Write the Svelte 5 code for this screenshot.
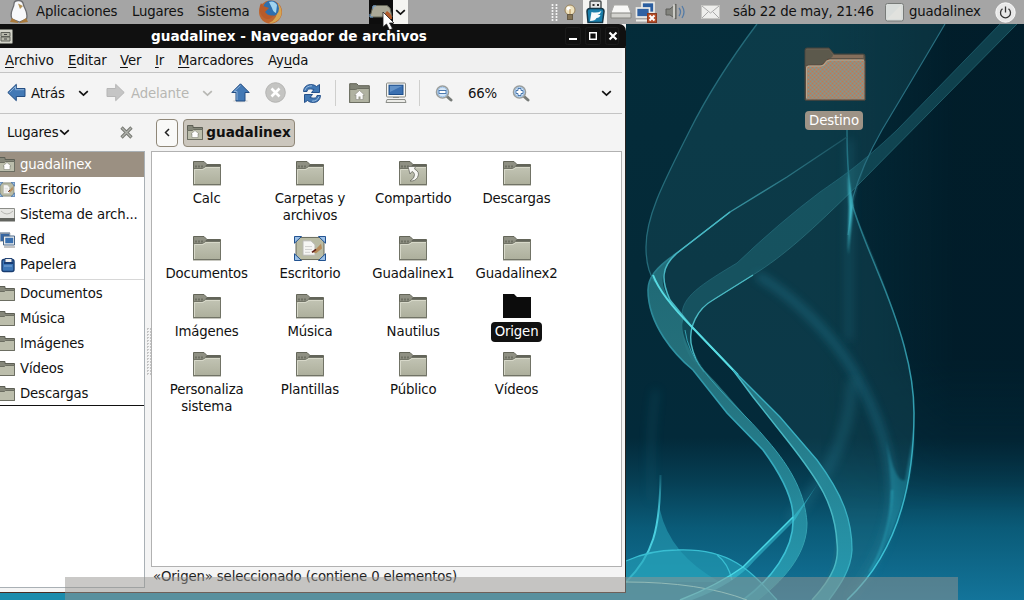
<script>
  const bookmarks = [
    { name: 'guadalinex', icon: 'home', selected: true },
    { name: 'Escritorio', icon: 'desktop' },
    { name: 'Sistema de arch...', icon: 'disk' },
    { name: 'Red', icon: 'network' },
    { name: 'Papelera', icon: 'trash' }
  ];
  const folders = ['Documentos', 'Música', 'Imágenes', 'Vídeos', 'Descargas'];
  const files = [
    ['Calc'], ['Carpetas y', 'archivos'], ['Compartido'], ['Descargas'],
    ['Documentos'], ['Escritorio'], ['Guadalinex1'], ['Guadalinex2'],
    ['Imágenes'], ['Música'], ['Nautilus'], ['Origen'],
    ['Personaliza', 'sistema'], ['Plantillas'], ['Público'], ['Vídeos']
  ];
  const kindOf = { Compartido: 'shared', Origen: 'selected' };
  const menus = [
    ['', 'A', 'rchivo', 49], ['', 'E', 'ditar', 38], ['', 'V', 'er', 21],
    ['', 'I', 'r', 9], ['', 'M', 'arcadores', 76], ['Ay', 'u', 'da', 40]
  ];
</script>

{#snippet folder(kind)}
  <svg class="fold" width="28" height="25" viewBox="0 0 28 25">
    {#if kind === 'selected'}
      <path d="M0 0h11l3 3h14v21H0z" fill="#0c0c0c" />
    {:else}
      <path d="M.5 23.500V.5H11l3 3h13.500v20z" fill="#8f9083" stroke="#646659" />
      <path d="M13.500 3.500h13.500v2H12z" fill="#62645a" />
      <path d="M2 5.500h8" stroke="#6f7164" stroke-width="2" stroke-dasharray="2 1" />
      <path d="M.5 8.500Q.5 7.500 2 7.500h7.500l3-2h15v18H.5z" fill="url(#fold-face)" stroke="#717366" />
      <path d="M1.500 23V8.500H10l3-2h14" fill="none" stroke="#d7d8c9" />
      <path d="M0 24.500h28" stroke="#c8c8c0" />
      {#if kind === 'shared'}
        <path d="M9 5.500h7.500L15.500 8q6 3 3 8.500-2.500 4-7.500 3.500 5-3 4.500-6.500-.5-2.500-2.500-3L11 13z" fill="#f7f7f4" stroke="#67685f" stroke-width=".8" />
      {/if}
    {/if}
  </svg>
{/snippet}

{#snippet desk(w, h)}
  <svg width={w} height={h} viewBox="0 0 32 26" preserveAspectRatio="none">
    <rect x="2" y="1.500" width="28" height="23" rx="2" fill="#b9bba4" stroke="#65675a" />
    <path d="M9 5h8l4 4v11H9z" fill="#f6f6f4" stroke="#b9b9b5" />
    <path d="M11 11h7M11 14h7M11 17h5" stroke="#cfcfcf" />
    <path d="M19 17l8-9 1 5-6 5z" fill="#b78c5b" />
    <path d="M18 17l4-3" stroke="#5c1d17" stroke-width="1.600" />
    <path d="M.5.5h7l-7 7zM31.500.5h-7l7 7zM.5 25.500h7l-7-7zM31.500 25.500h-7l7-7z" fill="#9cc0e6" stroke="#1c4e8e" />
  </svg>
{/snippet}

{#snippet smallFolder(home)}
  <svg width="16" height="16" viewBox="0 0 16 16">
    <path d="M.5.5h5.500v2h9.500v12H.5z" fill="#85877a" stroke="#5d5f55" />
    <path d="M.5 5.500h5l1-1h9v10H.5z" fill="#bcbeac" stroke="#6c6e62" />
    {#if home}<path d="M8 5.500l4 3.500h-1v3.500H5V9H4z" fill="#fff" stroke="#77796d" stroke-width=".5" />{/if}
  </svg>
{/snippet}

{#snippet chevron()}
  <svg width="11" height="7" viewBox="0 0 11 7"><path d="M1.200 1.200l4.300 4 4.300-4" fill="none" stroke="currentColor" stroke-width="1.700" /></svg>
{/snippet}

{#snippet magnifier(plus)}
  <svg width="18" height="18" viewBox="0 0 18 18">
    <path d="M11.500 12l4.500 4" stroke="#777b78" stroke-width="3" stroke-linecap="round" />
    <circle cx="7.500" cy="8" r="6" fill="#d5e6f7" stroke="#9a9d9b" stroke-width="1.600" />
    <circle cx="7.500" cy="8" r="4.800" fill="none" stroke="#9cc0e5" />
    {#if plus}
      <path d="M6 4.500h3v2h2v3H9v2H6v-2H4v-3h2z" fill="#fff" stroke="#3d6ea8" stroke-width=".9" />
    {:else}
      <rect x="4" y="6.500" width="7" height="3" fill="#fff" stroke="#3d6ea8" stroke-width=".9" />
    {/if}
  </svg>
{/snippet}

<div class="screen">
  <svg class="wall" width="1024" height="600" viewBox="0 0 1024 600">
    <defs>
      <linearGradient id="bg" x1="0" y1="0" x2="0" y2="1">
        <stop offset="0" stop-color="#042c3a" /><stop offset=".45" stop-color="#042a38" />
        <stop offset=".73" stop-color="#032a3a" /><stop offset=".8" stop-color="#063e53" />
        <stop offset=".88" stop-color="#0a5b78" /><stop offset="1" stop-color="#13749a" />
      </linearGradient>
      <linearGradient id="shade" x1=".8" x2=".93" y1="0" y2="0">
        <stop offset="0" stop-color="#001521" stop-opacity="0" /><stop offset="1" stop-color="#001521" stop-opacity=".6" />
      </linearGradient>
      <linearGradient id="shadeFade" x1="0" x2="0" y1="0" y2="1">
        <stop offset=".6" stop-color="#fff" /><stop offset=".85" stop-color="#000" />
      </linearGradient>
      <mask id="upper"><rect width="1024" height="600" fill="url(#shadeFade)" /></mask>
      <linearGradient id="ribbon" x1="0" x2="0" y1="240" y2="600" gradientUnits="userSpaceOnUse">
        <stop offset="0" stop-color="#2b8793" stop-opacity=".65" /><stop offset=".35" stop-color="#2b7c86" stop-opacity=".85" /><stop offset="1" stop-color="#29a2b8" stop-opacity=".85" />
      </linearGradient>
      <linearGradient id="edge" x1="0" x2="0" y1="24" y2="600" gradientUnits="userSpaceOnUse">
        <stop offset="0" stop-color="#1b5f70" /><stop offset=".4" stop-color="#287c8b" /><stop offset="1" stop-color="#3fcbe0" />
      </linearGradient>
      <linearGradient id="faint" x1="847" x2="720" y1="137" y2="220" gradientUnits="userSpaceOnUse">
        <stop offset="0" stop-color="#1b5260" /><stop offset="1" stop-color="#3a9aa8" />
      </linearGradient>
      <linearGradient id="wisp" x1="0" x2="0" y1="470" y2="520" gradientUnits="userSpaceOnUse">
        <stop offset="0" stop-color="#4acfdf" stop-opacity=".1" /><stop offset="1" stop-color="#4acfdf" />
      </linearGradient>
      <linearGradient id="fold-face" x1="0" y1="0" x2="0" y2="1"><stop offset="0" stop-color="#c2c4b4" /><stop offset="1" stop-color="#adaf9c" /></linearGradient>
      <filter id="soft" filterUnits="userSpaceOnUse" x="600" y="0" width="424" height="600"><feGaussianBlur stdDeviation="5" /></filter>
      <filter id="soft2" filterUnits="userSpaceOnUse" x="600" y="0" width="424" height="600"><feGaussianBlur stdDeviation="1" /></filter>
    </defs>
    <rect width="1024" height="600" fill="url(#bg)" />
    <rect width="1024" height="600" fill="url(#shade)" mask="url(#upper)" />
    <path d="M757 24Q715 80 690 130C665 180 646 215 646 247C646 285 675 310 692 327L740 378L817 477C845 520 838 570 812 600H847C890 555 914 490 914 413C910 330 870 250 853 207Q862 165 882 130L945 24z" fill="#2a7480" opacity=".22" />
    <path d="M757 275C800 300 835 340 853 370C885 425 893 470 892 503C891 535 870 573 847 600" fill="none" stroke="#237d95" stroke-width="6" opacity=".6" filter="url(#soft)" />
    <path d="M886 440C895 500 891 535 883 547Q870 573 847 600C890 555 914 490 914 430L905 480Q896 485 886 440z" fill="#27a0b7" opacity=".4" filter="url(#soft2)" />
    <path d="M892 490Q891 535 870 572" fill="none" stroke="#2fb4c9" opacity=".5" stroke-width="2" filter="url(#soft2)" />
    <path d="M852 380C850 440 825 480 790 520" fill="none" stroke="#2a8095" stroke-width="10" opacity=".3" filter="url(#soft)" />
    <path d="M849 140V340" stroke="#26758a" stroke-width="6" opacity=".35" filter="url(#soft)" />

    <path d="M1000 24L897 130C860 165 840 178 820 192Q780 222 737 263C700 285 682 297 682 315C680 335 685 350 692 360L711 378Q697 363 691 343C689 322 700 307 713 300L753 275C785 255 810 232 860 183L1017 24z" fill="#2b8490" opacity=".34" />
    <path d="M1000 24L897 130C860 165 840 178 820 192Q780 222 737 263C700 285 682 297 682 315" fill="none" stroke="#2a7585" stroke-width="1" opacity=".55" />
    <path d="M1017 24L860 183C810 232 785 255 753 275L713 300" fill="none" stroke="#347f8b" opacity=".55" />
    <path d="M753 275L713 300C697 309 689 327 691 343Q694 360 704 372" fill="none" stroke="#4bbac4" stroke-width="1.400" />
    <path d="M945 24Q915 75 882 130Q862 165 853 197L848 235" fill="none" stroke="#296f80" stroke-width="1.200" />
    <path d="M847 130Q847 178 853 207C860 230 869 250 877 270C900 325 914 370 914 413C914 500 890 560 847 600" fill="none" stroke="url(#edge)" stroke-width="1.500" />
    <path d="M847 145L848 173 853 207 848 255 849 207z" fill="#3fb9c8" filter="url(#soft2)" />
    <path d="M757 24Q715 80 690 130C665 180 646 215 646 247Q646 270 655 282" fill="none" stroke="#256b7a" stroke-width="1.300" />

    <path d="M847 137Q820 155 787 177L730 212 677 253" fill="none" stroke="url(#faint)" stroke-width="1.400" />
    <path d="M677 253C655 268 648 278 648 290C648 325 675 355 693 370L727 413L763 450C785 480 793 500 793 517C795 550 770 580 743 600H758C790 575 807 550 807 523C805 495 793 470 767 440C735 405 715 380 699 365C682 340 680 325 684 319L670 300C655 278 666 265 677 253z" fill="url(#ribbon)" />
    <path d="M677 253C655 268 648 278 648 290C648 325 675 355 693 370L727 413L763 450C785 480 793 500 793 517C795 550 770 580 743 600" fill="none" stroke="url(#edge)" stroke-width="1.600" />
    <path d="M685 330Q688 352 703 370C725 398 748 417 767 440C793 470 805 495 807 523C807 550 790 575 758 600" fill="none" stroke="#33a0b0" />
    <path d="M733 370C750 393 772 422 787 440C820 482 835 505 837 543C839 560 835 575 812 600H829C840 585 851 570 852 550C852 520 843 495 817 460L780 417z" fill="url(#ribbon)" />
    <path d="M730 212L677 253C661 267 661 280 670 300L692 327L733 370L753 397L787 440C820 482 835 505 837 543C839 560 835 575 812 600" fill="none" stroke="#48b8c4" stroke-width="1.500" />
    <path d="M653 275Q661 296 692 327L738 375" fill="none" stroke="#58dce3" stroke-width="2" />
    <path d="M733 370L780 417 817 460C843 495 852 520 852 550C851 570 840 585 829 600" fill="none" stroke="#38b0c2" stroke-width="1.300" />

    <path d="M652 500C650 460 650 430 656 390" stroke="#186378" fill="none" stroke-width="5" opacity=".35" filter="url(#soft)" />
    <path d="M660 487C660 530 653 555 626 582H720Q670 555 660 510z" fill="#2ba9bf" opacity=".5" />
    <path d="M660.500 475C660 530 653 555 626 582" fill="none" stroke="url(#wisp)" stroke-width="2" />
    <path d="M626 561Q650 550 677 550C730 548 750 570 777 600H626z" fill="#25a2b9" opacity=".6" />
    <path d="M626 561Q650 550 677 550C730 548 750 570 777 600M717 555Q728 563 732 580" fill="none" stroke="#39bed2" stroke-width="1.300" />
    <path d="M626 582Q700 582 747 600" fill="none" stroke="#8fe2df" />
    <path d="M820 480Q803 507 787 523L743 567Q718 585 680 600H692Q735 584 755 560L795 520z" fill="#3cc9dc" opacity=".5" />
    <path d="M793 517L743 567Q718 585 680 600" fill="none" stroke="#4bd8e5" stroke-width="1.500" />
    <rect y="592" width="630" height="8" fill="#1c8cac" />
  </svg>

  <header class="panel">
    <svg class="tux" width="20" height="24" viewBox="0 0 20 24">
      <path d="M3 19C0 12 5 8 5 4q0-3.500 4.500-3.500Q14 .5 14.500 5c1 4 5 7 3 14l-7 3z" fill="#f8f8fa" stroke="#6d6d70" stroke-width="1.300" />
      <path d="M9 3.500l5 2.500-3 3z" fill="#b49358" /><path d="M1 22l2-4 6 4v1zM19 22l-2-4-6 4v1z" fill="#a97a3c" />
    </svg>
    <span style="width:82px">Aplicaciones</span><span style="width:51px">Lugares</span><span style="width:53px">Sistema</span>
    <svg class="fox" width="25" height="24" viewBox="0 0 25 24">
      <circle cx="12.500" cy="12" r="11.500" fill="#be6630" /><path d="M20 3q6 8 2 15-5 6-11 5 10-4 9-20z" fill="#d6a552" />
      <circle cx="13" cy="8.500" r="8" fill="#2e6fae" /><path d="M11 2q5-2 8 3l-1 8q-3-1-4-5z" fill="#a0d3ef" />
      <path d="M3 3l2 3 6 2-4 4q4 5 9 3-4 6-10 3Q-1 11 3 3z" fill="#b85b2b" />
    </svg>
    <div class="task">
      <svg width="24" height="24" viewBox="0 0 24 24"><path d="M4 6l2-.5h12l3 2.500 2 9H1z" fill="#aaa998" stroke="#626456" /><path d="M1 14v3h3M4 9V6h3" fill="none" stroke="#6a9cd1" /><path d="M14 16l4-5q5 3 5 8h-5z" fill="#b35b2c" /></svg>
      <i>{@render chevron()}</i>
    </div>
    <svg class="tray" width="162" height="24" viewBox="0 0 162 24">
      <path d="M2.500 4v18M6.500 4v18" stroke="#f3f3f3" stroke-width="1.700" stroke-dasharray="2 1" />
      <circle cx="20" cy="10" r="5" fill="#efe3bf" stroke="#98825e" /><circle cx="18.500" cy="8.500" r="2" fill="#fff" /><path d="M20 9v6" stroke="#b88c4c" /><rect x="17.500" y="14.500" width="5" height="5" fill="#847354" stroke="#655a45" />
      <rect x="33" width="24" height="24" fill="#f4f4f2" />
      <path d="M40 9V2q0-1 1-1h9q1 0 1 1v7z" fill="#e6e6e5" stroke="#484d4f" stroke-width="1.400" /><path d="M42.500 5h2M47 5h2" stroke="#333" stroke-width="2" />
      <path d="M37 11.500q0-3 3-3h11q3 0 3 3L52.500 22.500H38z" fill="#197eaa" stroke="#153647" stroke-width="1.500" /><path d="M40 21l1.500-9q5 1.500 10-1-1 3-4 4h3q-1 3-4 3-1 3-6.500 3z" fill="#f6fbfc" />
      <path d="M64 5h14l3 8v5H61v-5z" fill="#f8f8f7" stroke="#a8a8a5" /><path d="M61 13h20v5H61z" fill="#d3d3cf" stroke="#858581" />
      <rect x="92" y="2.500" width="12" height="10" fill="#295da0" stroke="#ecece8" stroke-width="1.700" /><rect x="86.500" y="8" width="13" height="9" fill="#2f61a3" stroke="#ecece8" stroke-width="1.700" /><path d="M86 20.500h13" stroke="#ecece8" stroke-width="2" />
      <rect x="97.500" y="13.500" width="9" height="9" fill="#b64d27" stroke="#8b3a20" /><path d="M99.500 15.500l5 5M104.500 15.500l-5 5" stroke="#fff" stroke-width="2" />
      <path d="M116 9h4l6-5v15l-6-4h-4z" fill="#82837d" stroke="#5c5d58" /><path d="M124 4.500v14" stroke="#e5e5df" stroke-width="1.500" /><path d="M129 8q3 4 0 8M132 6q4 6 0 12" fill="none" stroke="#547ba6" stroke-width="1.300" />
    </svg>
    <svg class="mail" width="20" height="15" viewBox="0 0 20 15"><rect x=".5" y=".5" width="18" height="13" fill="#eeeeec" stroke="#c5c5c2" /><path d="M1 1l8.500 7L18 1M1 13l6-6M18 13l-6-6" fill="none" stroke="#aaa" /></svg>
    <span class="clock" style="width:140px">sáb 22 de may, 21:46</span>
    <svg class="stat" width="19" height="19" viewBox="0 0 19 19"><rect x=".5" y=".5" width="18" height="17.500" rx="2" fill="#d9dddb" stroke="#787b79" /><path d="M2 16L16 2v14z" fill="#e6e6e0" opacity=".6" /></svg>
    <span class="user" style="width:72px">guadalinex</span>
    <svg class="power" width="21" height="21" viewBox="0 0 21 21"><circle cx="10.500" cy="10.500" r="9.700" fill="#e8e8e8" stroke="#f9f9f9" /><path d="M7.500 6.800a5 5 0 1 0 6 0M10.500 4.500v6" fill="none" stroke="#343434" stroke-width="1.300" /></svg>
  </header>

  <main class="window">
    <div class="title">
      <svg width="13" height="15" viewBox="0 0 13 15"><rect x="-1" y=".5" width="13.500" height="14" rx="1" fill="#d3d3c9" stroke="#73756e" /><path d="M1 3.500h9v4H1zM1 8h9v4H1z" fill="#b6b7aa" stroke="#5e6058" /><path d="M4 5.500h3M4 10h3" stroke="#444" /></svg>
      <b>guadalinex - Navegador de archivos</b>
      <svg class="wm" width="56" height="20" viewBox="0 0 56 20"><g fill="none" stroke="#1b1b1b"><rect x="1.500" y="1.500" width="15" height="17" rx="2" /><rect x="21.500" y="1.500" width="15" height="17" rx="2" /><rect x="41.500" y="1.500" width="13" height="17" rx="2" /></g><path d="M5 13h8" stroke="#fff" stroke-width="2" /><path d="M25 6.800h8M25.700 6v8M32.300 6v8M25 13.200h8" stroke="#fff" stroke-width="1.400" /><path d="M45.500 6.500l7 7M52.500 6.500l-7 7" stroke="#fff" stroke-width="2.200" /></svg>
    </div>
    <nav class="menu">
      {#each menus as [pre, key, post, w]}<span style="width:{w}px">{pre}<u>{key}</u>{post}</span>{/each}
    </nav>
    <div class="tools">
      <svg class="back" width="19" height="20" viewBox="0 0 19 20"><path d="M.8 9.500l8.500-8.200V5.500H18v8H9.300v4.200z" fill="#4379b5" stroke="#244e83" /><path d="M2.500 9.500l6-6v3.200H17" fill="none" stroke="#8bb0d8" /></svg>
      <span class="atras">Atrás</span>
      <i class="c1">{@render chevron()}</i>
      <svg class="fwd" width="19" height="20" viewBox="0 0 19 20"><path d="M18.200 9.500L9.700 1.300V5.500H1v8h8.700v4.200z" fill="#c5c5c5" stroke="#b6b6b6" /></svg>
      <span class="adel">Adelante</span>
      <i class="c2">{@render chevron()}</i>
      <svg class="up" width="19" height="20" viewBox="0 0 19 20"><ellipse cx="9.500" cy="18" rx="8" ry="1.500" fill="#ddd" /><path d="M9.500.8L.8 9.500H5V18h9V9.500h4.200z" fill="#4379b5" stroke="#244e83" /><path d="M9.500 2.500L3 8.500h3V17" fill="none" stroke="#8bb0d8" /></svg>
      <svg class="stop" width="21" height="22" viewBox="0 0 21 22"><circle cx="10.500" cy="10.500" r="9.800" fill="#c4c4c2" stroke="#b4b4b2" /><path d="M6.500 6.500l8 8M14.500 6.500l-8 8" stroke="#fff" stroke-width="2.600" /></svg>
      <svg class="reload" width="20" height="21" viewBox="0 0 20 21"><path d="M1.500 8.500Q2 2 8.500 1.500q4 0 6 2l3-2v8h-8l2.500-3Q5 4.500 5 8.500z" fill="#4178b4" stroke="#24508a" /><path d="M18.500 12.500q-.5 6.500-7 7-4 0-6-2l-3 2v-8h8l-2.500 3q7 2 7-2z" fill="#4178b4" stroke="#24508a" /><path d="M2.800 7.500Q4 3 10 2.800M17 13.500Q15.500 18 10 18.200" fill="none" stroke="#9bbce0" /></svg>
      <span class="sep s1"></span>
      <svg class="homei" width="21" height="21" viewBox="0 0 21 21"><path d="M.7 19.500V.7h7l2 2h10.600v16.800z" fill="#818376" stroke="#606256" /><path d="M.7 19.500v-13h6l2-1h11.600v14z" fill="#b0b2a1" stroke="#6c6e62" /><path d="M10.500 7.500l5 4.500h-1.500v4.500h-7V12H5.500z" fill="#fafafa" stroke="#8a8a80" stroke-width=".6" /><path d="M9.500 13.500h2v3h-2z" fill="#989a8c" /></svg>
      <svg class="comp" width="22" height="22" viewBox="0 0 22 22"><rect x="1.500" y="1" width="19" height="14" rx="1" fill="#f6f6f3" stroke="#888a85" /><rect x="4" y="3.200" width="14" height="9.300" fill="#3b70b1" stroke="#1c4e8c" /><path d="M5 4h12l-12 6z" fill="#6392c7" /><path d="M8 15.500h6M2 17.500h18l1 3H1z" fill="#ecece8" stroke="#8c8e89" /></svg>
      <span class="sep s2"></span>
      <div class="zo">{@render magnifier(false)}</div>
      <span class="pct">66%</span>
      <div class="zi">{@render magnifier(true)}</div>
      <i class="c3">{@render chevron()}</i>
    </div>

    <div class="body">
      <aside>
        <div class="shead"><span>Lugares</span>{@render chevron()}
          <svg class="close" width="13" height="13" viewBox="0 0 13 13"><path d="M1.500 1.500l10 10M11.500 1.500l-10 10" stroke="#777973" stroke-width="3.200" /><path d="M2 2l9 9M11 2l-9 9" stroke="#b0b2ac" stroke-width="1.300" /></svg>
        </div>
        <div class="places">
          {#each bookmarks as b}
            <div class="place" class:on={b.selected}>
              {#if b.icon === 'home'}{@render smallFolder(true)}
              {:else if b.icon === 'desktop'}{@render desk(16, 15)}
              {:else if b.icon === 'disk'}
                <svg width="16" height="16" viewBox="0 0 16 16"><path d="M.5 1.500h15v12H.5z" fill="#e5e5e2" stroke="#8b8d88" /><path d="M2 4q6 6 12 0" fill="none" stroke="#b5b5b1" /><path d="M0 11h16v3.500H0z" fill="#62645f" /></svg>
              {:else if b.icon === 'network'}
                <svg width="16" height="16" viewBox="0 0 16 16"><rect x="1" y="1.500" width="10" height="8" fill="#3465a4" stroke="#c3c7ca" /><path d="M0 1h11" stroke="#475f7d" /><rect x="5.500" y="5" width="9.500" height="7" fill="#3970b0" stroke="#eee" stroke-width="1.500" /><path d="M4.500 4h11v9h-11z" fill="none" stroke="#496687" /><path d="M5 15h11" stroke="#888" /></svg>
              {:else}
                <svg width="16" height="16" viewBox="0 0 16 16"><rect x="3" y="2.500" width="12" height="12" rx="2" fill="#3c76b7" stroke="#183c70" stroke-width="1.400" /><path d="M6 1.500h7v5H6z" fill="#eee" stroke="#244576" /><path d="M5 5h9v2H5z" fill="#173c74" /><path d="M5 9h8" stroke="#81aad8" /></svg>
              {/if}
              <span>{b.name}</span>
            </div>
          {/each}
          <hr />
          {#each folders as f}<div class="place">{@render smallFolder(false)}<span>{f}</span></div>{/each}
          <div class="dropline"></div>
        </div>
      </aside>
      <div class="split"></div>
      <section>
        <div class="path">
          <button aria-label="Anterior"><svg width="6" height="9" viewBox="0 0 6 9"><path d="M5 1L1.500 4.500 5 8" fill="none" stroke="#222" stroke-width="1.500" /></svg></button>
          <button class="here">{@render smallFolder(true)}<b>guadalinex</b></button>
        </div>
        <div class="icons">
          {#each files as f}
            <div class="file" class:sel={f[0] === 'Origen'}>
              {#if f[0] === 'Escritorio'}{@render desk(32, 25)}{:else}{@render folder(kindOf[f[0]])}{/if}
              <div class="label">{#each f as line}<div>{line}</div>{/each}</div>
            </div>
          {/each}
        </div>
        <footer>«Origen» seleccionado (contiene 0 elementos)</footer>
      </section>
    </div>
  </main>

  <div class="destino">
    <svg width="62" height="55" viewBox="0 0 62 55">
      <defs><pattern id="grain" width="4" height="4" patternUnits="userSpaceOnUse"><rect width="4" height="4" fill="#9b8a78" /><path d="M0 0h1v1H0zM2 2h1v1H2z" fill="#c8774c" /><path d="M2 0h1v1H2zM0 2h1v1H0z" fill="#7f9a90" /></pattern></defs>
      <path d="M1 53V3q0-2 2-2h22l5 6h29q2 0 2 2v44z" fill="#665e50" stroke="#45433c" />
      <path d="M29 8h30v3H26z" fill="#846e5b" /><path d="M2 3h23l4 6-6 6-7 3H2z" fill="#5c594c" />
      <path d="M1.500 53V20q0-2 3-2H16q3 0 4.500-3t4.500-3h33q3 0 3 2v39z" fill="url(#grain)" stroke="#54493e" />
      <path d="M2.500 51V21q0-2 3-2H17q3 0 4.500-3t4.500-3h34" fill="none" stroke="#bba58b" />
    </svg>
    <span>Destino</span>
  </div>
  <div class="strip"></div>
  <svg class="cursor" width="14" height="20" viewBox="0 0 14 20"><path d="M1 1v15l3.500-3 3 6 3-1.500-3-5.500H12z" fill="#fff" stroke="#222" stroke-width=".8" /></svg>
</div>

<style>
  :global(body) { margin: 0; overflow: hidden; }
  .screen { position: relative; width: 1024px; height: 600px; overflow: hidden; font: 13.300px/17px "DejaVu Sans", sans-serif; letter-spacing: -.15px; color: #111; }
  svg { display: block; flex: none; }
  span, b { white-space: nowrap; }
  i { display: block; }
  .wall { position: absolute; inset: 0; }
  .panel { position: relative; height: 24px; display: flex; align-items: center; background: #a5a5a5; }
  .panel span { flex: none; margin-right: 14px; height: 19px; }
  .tux { margin: 0 7px 0 9px; }
  .fox { margin-left: -6px; }
  .task { margin-left: 86px; height: 24px; width: 39px; flex: none; display: flex; background: #f5f5f2; align-items: center; }
  .task svg { background: #0d0d0d; }
  .task i { margin-left: 2px; }
  .task i :global(svg) { background: none; }
  .tray { margin-left: 142px; }
  .mail { margin-left: -11px; }
  .panel .clock { margin-left: 12px; margin-right: 12px; letter-spacing: -.24px; }
  .panel .user { margin: 0 14px 0 5px; }
  .window { position: relative; width: 626px; height: 568px; display: flex; flex-direction: column; background: #f4f4f4; border-bottom: 1px solid #482d23; }
  .window::after { content: ""; position: absolute; right: 0; top: 22px; bottom: 0; width: 1px; background: #252321; }
  .title { height: 24px; flex: none; background: #101010; display: flex; align-items: center; border-radius: 0 7px 0 0; }
  .title b { margin-left: 138px; color: #fff; width: 276px; font-size: 13.600px; letter-spacing: 0; }
  .title .wm { margin-left: 137px; }
  .menu { height: 24px; flex: none; display: flex; gap: 14px; padding-left: 5px; align-items: center; background: #f0f0f0; border-bottom: 1px solid #c4c4c4; margin-right: 4px; }
  .menu u { text-underline-offset: 2px; text-decoration-thickness: 1px; }
  .tools { height: 40px; flex: none; display: flex; align-items: center; border-bottom: 1px solid #c4c4c4; margin-right: 4px; }
  .back { margin-left: 7px; }
  .atras { width: 34px; margin-left: 5px; }
  .c1 { margin-left: 13px; }
  .fwd { margin-left: 17px; }
  .adel { width: 58px; margin-left: 6px; color: #b7b7b3; }
  .c2 { margin-left: 13px; color: #b7b7b3; }
  .up { margin-left: 18px; }
  .stop { margin-left: 15px; }
  .reload { margin-left: 16px; }
  .sep { width: 1px; height: 26px; background: #cfcfcd; flex: none; }
  .s1 { margin-left: 13px; }
  .homei { margin-left: 13px; }
  .comp { margin-left: 15px; }
  .s2 { margin-left: 12px; }
  .zo { margin-left: 15px; }
  .pct { margin-left: 15px; width: 28px; }
  .zi { margin-left: 16px; }
  .c3 { margin-left: 71px; }
  .body { flex: 1; display: flex; min-height: 0; }
  aside { width: 145px; flex: none; display: flex; flex-direction: column; }
  .shead { height: 37px; flex: none; display: flex; align-items: center; padding-left: 7px; }
  .shead span { width: 52px; }
  .close { margin-left: 50px; }
  .places { height: 435px; background: #fff; border: solid #a9b0b5; border-width: 1px 1px 1px 0; }
  .place { height: 25px; display: flex; align-items: center; }
  .place :global(svg) { width: 16px; margin-left: -1px; }
  .place span { margin-left: 5px; }
  .on { background: #9b9082; color: #fff; }
  hr { margin: 2px 0 1px; border: 0; height: 1px; background: #d7d7d7; }
  .dropline { height: 1px; background: #111; margin-top: -1px; }
  .split { width: 6px; flex: none; }
  .split::after { content: ""; display: block; margin: 214px 0 0 1px; width: 5px; height: 47px; background: conic-gradient(#c4c4c4 25%, transparent 0) 0 0 / 3px 3px; }
  section { width: 471px; display: flex; flex-direction: column; }
  .path { height: 37px; flex: none; display: flex; align-items: center; gap: 5px; padding-left: 5px; }
  .path button { height: 28px; width: 22px; padding: 0; box-sizing: border-box; border: 1px solid #8f8778; border-radius: 4px; background: #f9f9f8; display: flex; align-items: center; justify-content: center; }
  .path .here { width: 112px; background: #cbc6bd; font: bold 13.600px/17px "DejaVu Sans", sans-serif; color: #111; gap: 3px; }
  .icons { height: 416px; box-sizing: border-box; border: 1px solid #b1b1b1; background: #fff; display: grid; grid-template-columns: repeat(4, 103.300px); grid-auto-rows: max-content; row-gap: 12px; align-content: start; padding: 9px 0 0 3px; }
  .file { display: flex; flex-direction: column; align-items: center; }
  .file :global(svg) { height: 25px; margin-bottom: 4px; }
  .label { text-align: center; white-space: nowrap; }
  .sel .label { background: #111; color: #fff; border-radius: 4px; padding: 1px 4px 2px; margin: -1px 0 -2px; }
  footer { padding: 1px 2px; white-space: nowrap; color: #222; }
  .destino { position: absolute; left: 803px; top: 47px; display: flex; flex-direction: column; align-items: center; gap: 9px; width: 62px; }
  .destino svg { margin-left: 1px; }
  .destino span { background: #9d9386; color: #fff; border-radius: 4px; padding: 1px 4px; width: 50px; height: 17px; text-align: center; }
  .strip { position: absolute; left: 65px; top: 577px; width: 893px; height: 23px; background: rgba(150, 147, 143, .5); }
  .cursor { position: absolute; left: 382px; top: 11px; }
</style>
